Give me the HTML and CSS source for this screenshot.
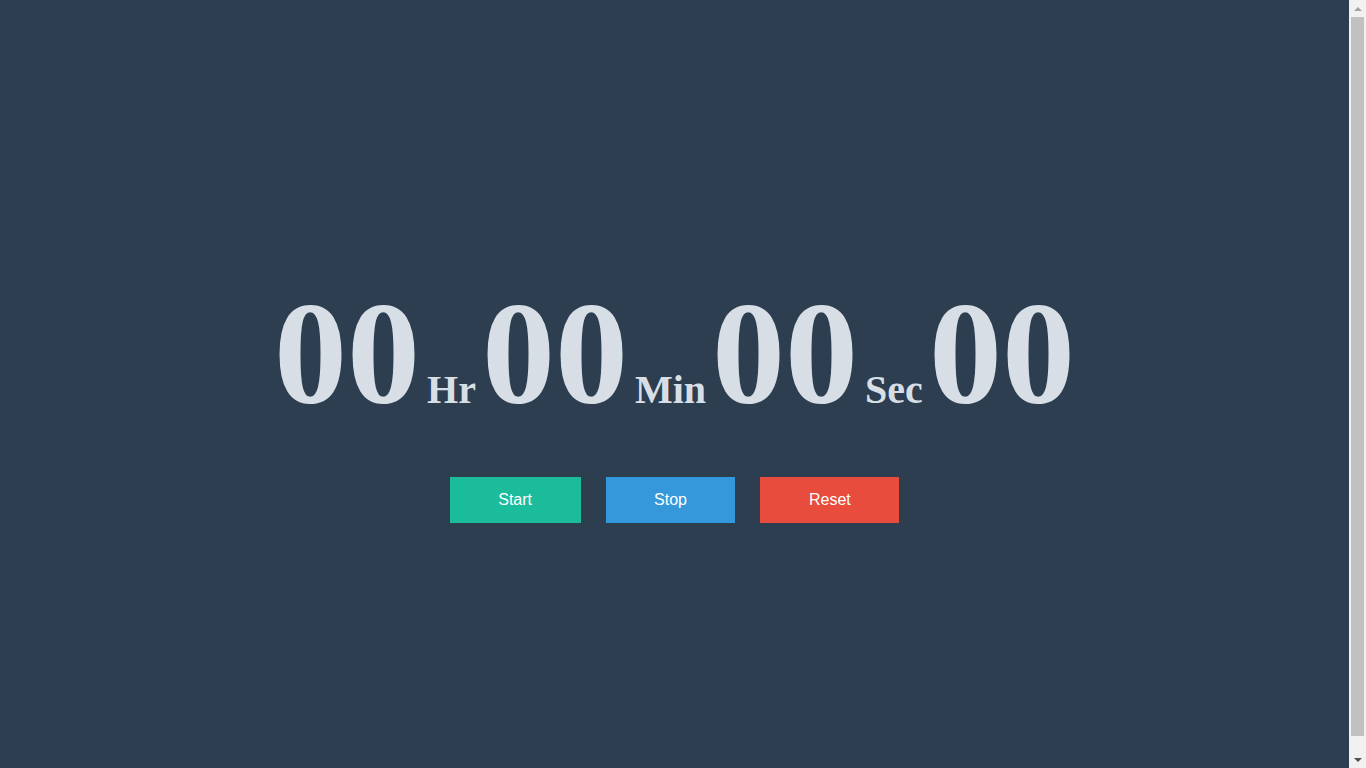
FILE: index.html
```html
<!DOCTYPE html>
<html lang="en">
<head>
<meta charset="utf-8">
<title>Stopwatch</title>
<link rel="stylesheet" href="styles.css">
</head>
<body>
<main class="stage">
  <div class="timer"><span class="digits">00</span><span class="unit">Hr</span><span class="digits">00</span><span class="unit">Min</span><span class="digits">00</span><span class="unit">Sec</span><span class="digits">00</span></div>
  <div class="controls">
    <button class="btn btn-start" type="button">Start</button>
    <button class="btn btn-stop" type="button">Stop</button>
    <button class="btn btn-reset" type="button">Reset</button>
  </div>
</main>
<div class="scrollbar" aria-hidden="true">
  <div class="sb-arrow sb-up"></div>
  <div class="sb-track"><div class="sb-thumb"></div></div>
  <div class="sb-arrow sb-down"></div>
</div>
</body>
</html>
```
FILE: styles.css
```css
html {
  background: #2c3e50;
}
body {
  margin: 8px 25px 8px 8px;
  background: #2c3e50;
}
.stage {
  height: 100vh;
  display: flex;
  flex-direction: column;
  align-items: center;
  justify-content: center;
  padding-top: 13px;
  box-sizing: border-box;
}
.timer {
  font-family: "Liberation Serif", "Times New Roman", serif;
  font-weight: bold;
  font-size: 146px;
  line-height: 160px;
  color: #d7dee5;
  white-space: nowrap;
}
.unit {
  font-size: 40px;
  line-height: 1;
  margin: 0 6px 0 7px;
}
.controls {
  display: flex;
  gap: 25px;
  margin-top: 43px;
}
.btn {
  font-family: "Liberation Sans", Arial, sans-serif;
  font-size: 16px;
  line-height: 18px;
  color: #fff;
  border: none;
  padding: 14px 48.5px;
  cursor: pointer;
}
.btn-start { background: #1abc9c; }
.btn-stop { background: #3498db; }
.btn-reset { background: #e74c3c; }

.scrollbar {
  position: fixed;
  top: 0;
  right: 0;
  width: 17px;
  height: 100vh;
  background: #f1f1f1;
  display: flex;
  flex-direction: column;
}
.sb-arrow {
  height: 17px;
  display: flex;
  align-items: center;
  justify-content: center;
}
.sb-up::before {
  content: "";
  border-left: 4px solid transparent;
  border-right: 4px solid transparent;
  border-bottom: 4px solid #a3a3a3;
}
.sb-down::before {
  content: "";
  border-left: 4px solid transparent;
  border-right: 4px solid transparent;
  border-top: 4px solid #505050;
}
.sb-track {
  flex: 1;
  padding: 0 2px 15px;
}
.sb-thumb {
  height: 100%;
  background: #c1c1c1;
}
```
